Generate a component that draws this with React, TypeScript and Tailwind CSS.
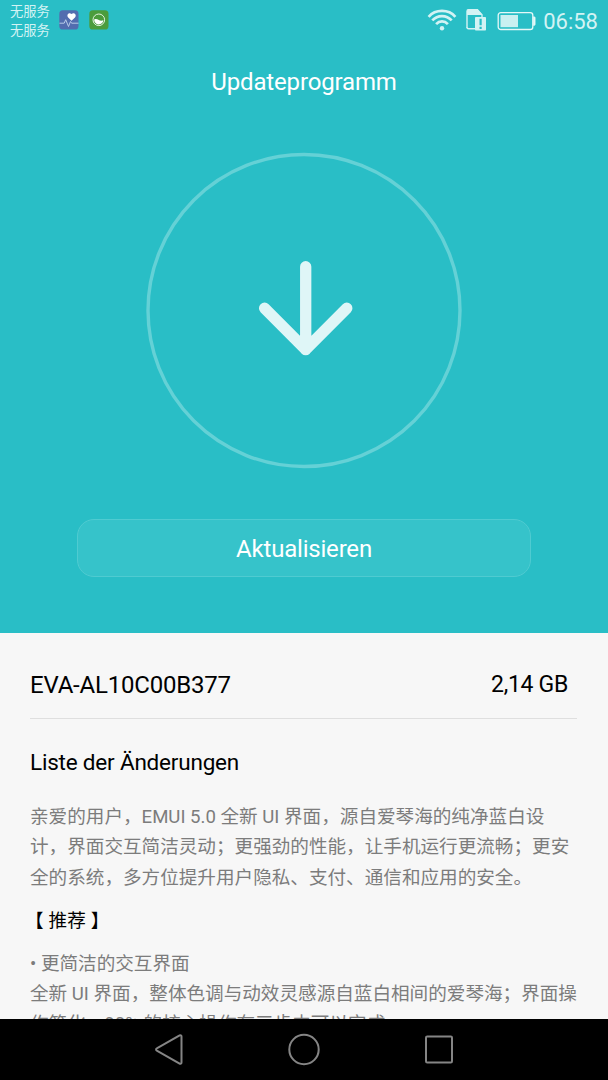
const WifiIcon = () => (
  <svg width="30" height="24" viewBox="0 0 30 24" fill="none" stroke="#d3f3f4" strokeWidth="2.7">
    <path d="M1.6 8.8C5.2 4.7 10 2.9 15 2.9s9.8 1.8 13.4 5.9" />
    <path d="M5.3 12.4c2.7-2.9 6-4.3 9.7-4.3s7 1.4 9.7 4.3" />
    <path d="M9.1 16.1c1.7-1.8 3.6-2.7 5.9-2.7s4.2.9 5.9 2.7" />
    <circle cx="15" cy="20.3" r="2.2" fill="#d3f3f4" stroke="none" />
  </svg>
);

const SimIcon = () => (
  <svg width="21" height="24" viewBox="0 0 21 24" fill="none">
    <path d="M1 20V3.2a1.5 1.5 0 0 1 1.5-1.5h8.8L16 6.8V9" stroke="#d3f3f4" strokeWidth="1.4" />
    <path d="M1 7V3a2 2 0 0 1 2-2h8.6l4.6 6z" fill="#d3f3f4" />
    <path d="M1 19.3a1.5 1.5 0 0 0 1.5 1.5H9" stroke="#d3f3f4" strokeWidth="1.4" />
    <rect x="9" y="9" width="11" height="13.6" rx=".8" fill="#d3f3f4" />
    <path d="M14.6 10.8v6.4M14.6 18.8v2.2" stroke="#29bec6" strokeWidth="2.2" />
  </svg>
);

const BatteryIcon = () => (
  <svg width="39" height="20" viewBox="0 0 39 20" fill="none">
    <rect x="1.2" y="1.7" width="34.6" height="16.8" rx="2.6" stroke="#e5f8f8" strokeWidth="1.3" />
    <rect x="3.5" y="4" width="17.5" height="12.2" fill="#c9f0f1" />
    <path d="M36.2 5.8h1a1 1 0 0 1 1 1v6.6a1 1 0 0 1-1 1h-1z" fill="#e5f8f8" stroke="#e5f8f8" strokeWidth=".5" />
  </svg>
);

const HealthIcon = () => (
  <svg width="20" height="20" viewBox="0 0 20 20" fill="none">
    <rect x=".3" y=".3" width="19.2" height="19.2" rx="3.6" fill="#526daf" />
    <path d="M12.5 10.8 9.2 7.4C7 4.9 10 1.6 12.5 4.1c2.5-2.5 5.7.8 3.5 3.3z" fill="#fff" />
    <path d="M.5 13.2h4.7l1.5-3.5 2.8 6.8 2-5 1.1 1.7h6.9" stroke="#b9cbe8" strokeWidth="1" />
  </svg>
);

const GreenIcon = () => (
  <svg width="20" height="20" viewBox="0 0 20 20" fill="none">
    <rect x=".3" y=".3" width="19.2" height="19.2" rx="3.6" fill="#4b9c3c" />
    <circle cx="9.8" cy="9.8" r="5.8" stroke="#e4f2df" strokeWidth="1" />
    <path d="M5.2 9.4c1.8-.6 3.1-.2 4.6.6 1.6.9 3 .8 4.6.2a4.6 4.6 0 0 1-9.2-.8z" fill="#fff" />
  </svg>
);

const StatusBar = () => (
  <div className="flex h-[42px] items-start justify-between pl-[10px] pr-[10px]">
    <div className="flex items-start">
      <div className="w-[49px] pt-[3px] text-[13.3px] leading-[18.5px] text-[#d3f3f4]">
        <p>无服务</p>
        <p>无服务</p>
      </div>
      <div className="flex gap-[10px] pt-[10px]">
        <HealthIcon />
        <GreenIcon />
      </div>
    </div>
    <div className="flex items-start text-[#d3f3f4]">
      <div className="pt-[8px] pr-[9px]">
        <WifiIcon />
      </div>
      <div className="pt-[8px] pr-[10px]">
        <SimIcon />
      </div>
      <div className="pt-[11px] pr-[7px]">
        <BatteryIcon />
      </div>
      <span className="pt-[8px] text-[22px] leading-[28px]">06:58</span>
    </div>
  </div>
);

const NavBar = () => (
  <nav className="flex h-[61px] shrink-0 items-center justify-center bg-black">
    <svg width="608" height="61" viewBox="0 0 608 61" fill="none" stroke="#858585" strokeWidth="2">
      <path d="M156.8 31.6a1.2 1.2 0 0 1 0-2.2l22.8-13a1.2 1.2 0 0 1 1.9 1v26.2a1.2 1.2 0 0 1-1.9 1z" />
      <circle cx="304" cy="30.5" r="14.7" />
      <rect x="426" y="17.5" width="26" height="26" rx="1.2" />
    </svg>
  </nav>
);

export default function App() {
  return (
    <div className="flex h-[1080px] w-[608px] flex-col overflow-hidden bg-[#f7f7f7] font-[Roboto,'Noto_Sans_CJK_SC',sans-serif]">
      {/* Update header */}
      <header className="flex h-[633px] shrink-0 flex-col bg-[#29bec6]">
        <StatusBar />
        <h1 className="mt-[24px] text-center text-[24px] leading-[32px] tracking-[-0.15px] text-white">Updateprogramm</h1>

        <div className="mt-[54px] flex justify-center">
          <svg width="318" height="318" viewBox="0 0 318 318" fill="none">
            <circle cx="159" cy="158.5" r="156" stroke="#64d1d6" strokeWidth="3.4" />
            <path
              d="M160.7 114.7v83M119.6 156.2l41.1 41.3 41.1-41.3"
              stroke="#dff6f7"
              strokeWidth="11.3"
              strokeLinecap="round"
              strokeLinejoin="round"
            />
          </svg>
        </div>

        <button className="mx-auto mt-[49px] h-[58px] w-[454px] rounded-[17px] border border-[#4fcbd1] bg-[#36c3ca] pt-[2px] text-[24px] tracking-[-0.2px] text-white">
          Aktualisieren
        </button>
      </header>

      {/* Details */}
      <main className="min-h-0 flex-1 overflow-hidden pr-[31px] pl-[30px]">
        <div className="flex h-[86px] items-center justify-between border-b border-[#dfdfdf] pt-[18px] pr-[9px] text-black">
          <span className="text-[24px] tracking-[-0.2px]">EVA-AL10C00B377</span>
          <span className="pt-[2px] text-[23px] tracking-[-0.3px]">2,14 GB</span>
        </div>

        <h2 className="mt-[27px] text-[22.5px] leading-[32px] tracking-[-0.2px] text-black">Liste der Änderungen</h2>

        <div className="mt-[24px] text-[18.6px] leading-[30.4px] whitespace-nowrap text-[#7c7c7c]">
          <p>亲爱的用户，EMUI 5.0 全新 UI 界面，源自爱琴海的纯净蓝白设</p>
          <p>计，界面交互简洁灵动；更强劲的性能，让手机运行更流畅；更安</p>
          <p>全的系统，多方位提升用户隐私、支付、通信和应用的安全。</p>
          <p className="mt-[13px] text-black">
            <span className="-ml-[5px] mr-[5px]">【</span>推荐<span className="ml-[5px]">】</span>
          </p>
          <p className="mt-[12px]">• 更简洁的交互界面</p>
          <p>全新 UI 界面，整体色调与动效灵感源自蓝白相间的爱琴海；界面操</p>
          <p>作简化，90% 的核心操作在三步内可以完成。</p>
        </div>
      </main>

      <NavBar />
    </div>
  );
}
